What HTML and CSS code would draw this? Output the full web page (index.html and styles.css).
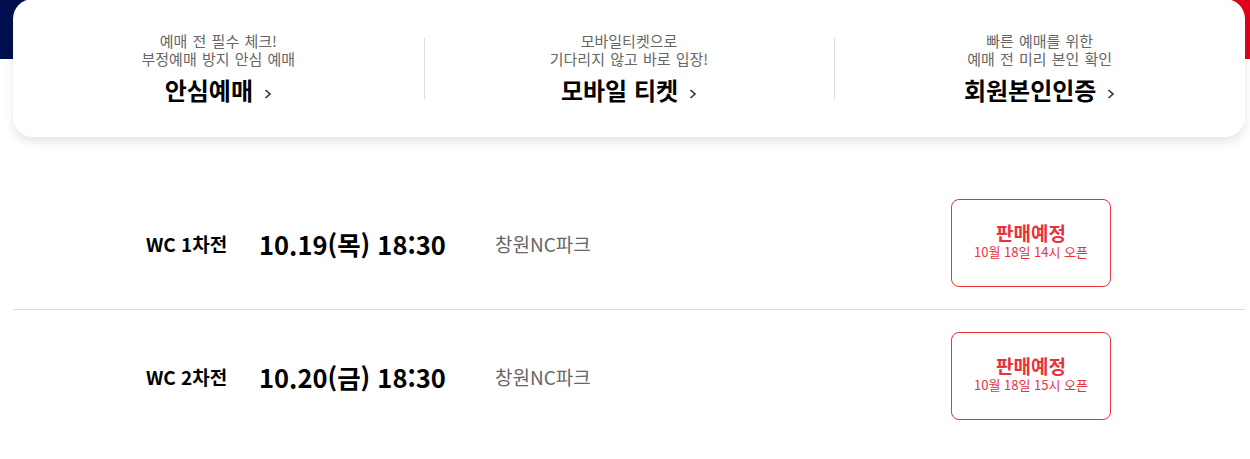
FILE: index.html
```html
<!DOCTYPE html>
<html lang="ko">
<head>
    <meta charset="UTF-8">
    <meta name="viewport" content="width=device-width, initial-scale=1.0">
    <title>포스트시즌 예매</title>
    <link rel="stylesheet" href="styles.css">
</head>
<body>
    <div class="top">
        <div class="quick">
            <a class="quick-item" href="#">
                <p class="quick-desc">예매 전 필수 체크!<br>부정예매 방지 안심 예매</p>
                <strong class="quick-title">안심예매<svg class="arrow" width="8" height="10" viewBox="0 0 8 10"><polyline points="1.5,1 6,5 1.5,9"/></svg></strong>
            </a>
            <a class="quick-item" href="#">
                <p class="quick-desc">모바일티켓으로<br>기다리지 않고 바로 입장!</p>
                <strong class="quick-title">모바일 티켓<svg class="arrow" width="8" height="10" viewBox="0 0 8 10"><polyline points="1.5,1 6,5 1.5,9"/></svg></strong>
            </a>
            <a class="quick-item" href="#">
                <p class="quick-desc">빠른 예매를 위한<br>예매 전 미리 본인 확인</p>
                <strong class="quick-title">회원본인인증<svg class="arrow" width="8" height="10" viewBox="0 0 8 10"><polyline points="1.5,1 6,5 1.5,9"/></svg></strong>
            </a>
        </div>
    </div>

    <ul class="games">
        <li class="game">
            <span class="game-name">WC 1차전</span>
            <span class="game-date">10.19(목) 18:30</span>
            <span class="game-place">창원NC파크</span>
            <a class="status" href="#">
                <strong class="status-title">판매예정</strong>
                <span class="status-open">10월 18일 14시 오픈</span>
            </a>
        </li>
        <li class="game">
            <span class="game-name">WC 2차전</span>
            <span class="game-date">10.20(금) 18:30</span>
            <span class="game-place">창원NC파크</span>
            <a class="status" href="#">
                <strong class="status-title">판매예정</strong>
                <span class="status-open">10월 18일 15시 오픈</span>
            </a>
        </li>
    </ul>
</body>
</html>
```

FILE: styles.css
```css
body {
    margin: 0;
    font-family: "Noto Sans CJK KR", "Noto Sans", sans-serif;
    color: #000;
    background: #fff;
}
a {
    color: inherit;
    text-decoration: none;
}
.top {
    padding: 0 5px 0 13px;
    background: linear-gradient(to right, #000f4e 50%, #e0001b 50%) top left / 100% 60px no-repeat;
}
.quick {
    display: grid;
    grid-template-columns: repeat(3, 1fr);
    margin-top: -1px;
    padding: 33px 0 32px;
    background: #fff;
    border-radius: 20px;
    box-shadow: 0 5px 10px rgba(0, 0, 0, 0.1);
}
.quick-item {
    position: relative;
    text-align: center;
}
.quick-item + .quick-item::before {
    content: "";
    position: absolute;
    left: 0;
    top: 6px;
    bottom: 6px;
    width: 1px;
    background: #ddd;
}
.quick-desc {
    margin: 0;
    font-size: 15px;
    line-height: 18px;
    word-spacing: 1px;
    color: #666;
}
.quick-title {
    display: block;
    margin-top: 6px;
    font-size: 24px;
    line-height: 31px;
    font-weight: 700;
}
.arrow {
    margin-left: 11px;
    vertical-align: 1px;
}
.arrow polyline {
    fill: none;
    stroke: #333;
    stroke-width: 1.6;
}
.games {
    margin: 40px 5px 0 13px;
    padding: 0;
    list-style: none;
}
.game {
    display: grid;
    grid-template-columns: 113px 236px 1fr 160px;
    align-items: center;
    padding: 22px 134px 22px 133px;
    border-bottom: 1px solid #ddd;
}
.game:last-child {
    border-bottom: none;
}
.game-name {
    font-size: 19px;
    font-weight: 700;
}
.game-date {
    font-size: 25.5px;
    font-weight: 700;
}
.game-place {
    font-size: 19px;
    color: #666;
}
.status {
    display: flex;
    flex-direction: column;
    align-items: center;
    justify-content: center;
    box-sizing: border-box;
    height: 88px;
    padding-bottom: 4px;
    border: 1px solid #e8333c;
    border-radius: 8px;
    color: #e8333c;
}
.status-title {
    font-size: 19px;
    line-height: 22px;
}
.status-open {
    font-size: 13px;
    line-height: 16px;
}
```
